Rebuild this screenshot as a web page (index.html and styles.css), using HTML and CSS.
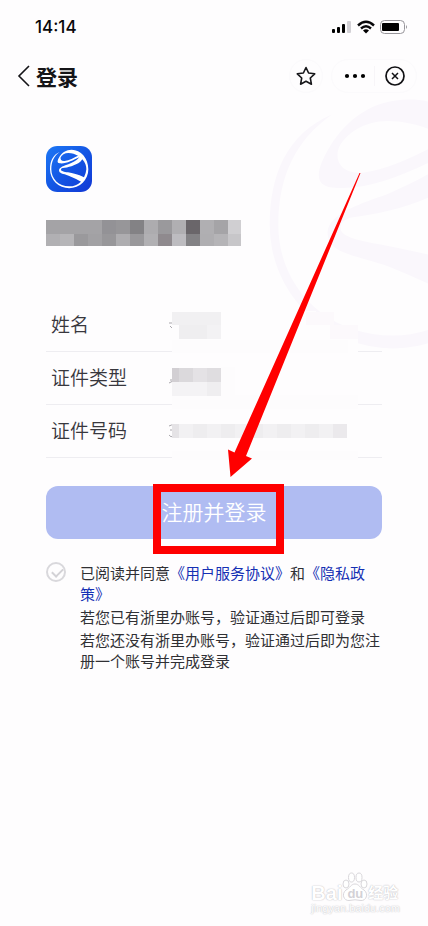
FILE: index.html
```
<!DOCTYPE html>
<html lang="zh-CN">
<head>
<meta charset="utf-8">
<meta name="viewport" content="width=device-width, initial-scale=1">
<title>登录</title>
<link rel="stylesheet" href="styles.css">
</head>
<body>
<svg width="0" height="0" class="defs" aria-hidden="true">
  <symbol id="mark" viewBox="0 0 138 138">
    <path d="M41 18C20 27 12 46 12 69.500A57.500 57.500 0 0 0 69.500 127A57.500 57.500 0 0 0 127 69.500C127 36 104 11 77 11C60 11 48 20 40 33C34 43 32 51 41 52C61 54 80 43 100 34C91 45 78 50 67 55C56 59 39 64 39 73C39 83 51 83 68 89Q88 97 105 107A52 52 0 0 1 69.500 121C38 121 16 98 16 69.500C16 47 24 30 41 18ZM96 29C84 35 70 43 56 45C47 46 42 41 44 34C47 27 56 21 67 21C78 21 88 25 96 29ZM50 66C66 64 87 59 103 47L109 40C118 50 121 60 121 70Q120 83 114 94C96 84 80 82 66 79C54 77 45 75 45 71C45 68 47 67 50 66Z" fill-rule="evenodd"/>
  </symbol>
</svg>
<div class="page">
  <svg class="backdrop" aria-hidden="true"><use href="#mark"/></svg>

  <div class="status">
    <span class="time">14:14</span>
    <div class="indicators">
      <svg width="20" height="14" viewBox="0 0 20 14" aria-hidden="true">
        <rect x="0" y="9" width="3" height="4" rx="1"/><rect x="5" y="7" width="3" height="6" rx="1"/><rect x="10" y="4" width="3" height="9" rx="1"/><rect x="15" y="1" width="4" height="12" rx="1" fill="#d3d1d6"/>
      </svg>
      <svg width="18" height="14" viewBox="0 0 18 14" aria-hidden="true">
        <path d="M1 5.500Q9-2 17 5.500M4 8.500Q9 4 14 8.500" fill="none" stroke="#08080a" stroke-width="2.400"/><path d="M6 10.500Q9 8 12 10.500L9 13.500Z"/>
      </svg>
      <svg width="28" height="14" viewBox="0 0 28 14" aria-hidden="true">
        <rect x=".5" y=".5" width="24" height="13" rx="4" fill="none" stroke="#97959a"/><rect x="2" y="3" width="17" height="8" rx="1"/><path d="M26 5Q28 7 26 9Z" fill="#97959a"/>
      </svg>
    </div>
  </div>

  <header class="nav">
    <button class="icon-btn" type="button" aria-label="返回"><svg width="14" height="22" viewBox="0 0 14 22"><path d="M12 1L2 11L12 21" fill="none" stroke="#151518" stroke-width="1.600"/></svg></button>
    <h1>登录</h1>
    <button class="icon-btn star" type="button" aria-label="收藏"><svg width="20" height="20" viewBox="0 0 20 20"><path d="M10 1.500L12.600 7L18.700 7.800L14.300 12L15.400 18.200L10 15.300L4.600 18.200L5.700 12L1.300 7.800L7.400 7Z" fill="none" stroke="#17171a" stroke-width="1.600" stroke-linejoin="round"/></svg></button>
    <div class="capsule">
      <button class="icon-btn" type="button" aria-label="更多"><svg width="22" height="6" viewBox="0 0 22 6"><circle cx="3" cy="3" r="2.100"/><circle cx="11" cy="3" r="2.100"/><circle cx="19" cy="3" r="2.100"/></svg></button>
      <button class="icon-btn close" type="button" aria-label="关闭"><svg width="20" height="20" viewBox="0 0 20 20"><circle cx="10" cy="10" r="9" fill="none" stroke="#111114" stroke-width="1.700"/><path d="M7 7L13 13M13 7L7 13" stroke="#111114" stroke-width="1.500"/></svg></button>
    </div>
  </header>

  <main>
    <svg class="logo" width="46" height="46" viewBox="0 0 138 138" role="img" aria-label="浙里办">
      <defs><linearGradient id="blue" x1="0" y1="0" x2="1" y2="1"><stop offset="0" stop-color="#1d78f5"/><stop offset=".5" stop-color="#1456e4"/><stop offset="1" stop-color="#1237d4"/></linearGradient></defs>
      <rect width="138" height="138" rx="34" fill="url(#blue)"/>
      <use href="#mark" fill="#fff"/>
    </svg>

    <svg class="masked-name" width="195" height="26" viewBox="0 0 195 26" shape-rendering="crispEdges" aria-hidden="true">
      <path fill="#a4a3a6" d="M0 0h56v14H0z"/><path fill="#939296" d="M56 0h14v14H56z"/><path fill="#979699" d="M70 0h14v14H70z"/><path fill="#838285" d="M84 0h14v14H84z"/><path fill="#adacaf" d="M98 0h14v14H98z"/><path fill="#9a999c" d="M112 0h14v14h-14z"/><path fill="#b0afb2" d="M126 0h14v14h-14z"/><path fill="#6a666a" d="M140 0h14v14h-14z"/><path fill="#b0afb2" d="M154 0h14v14h-14z"/><path fill="#a5a4a7" d="M168 0h14v14h-14z"/><path fill="#d0cfd2" d="M182 0h13v14h-13z"/>
      <path fill="#b1b0b3" d="M0 14h14v12H0z"/><path fill="#b6b5b8" d="M14 14h14v12H14z"/><path fill="#9a999c" d="M28 14h14v12H28z"/><path fill="#a2a1a4" d="M42 14h14v12H42z"/><path fill="#98979a" d="M56 14h14v12H56z"/><path fill="#aeadb0" d="M70 14h14v12H70z"/><path fill="#99989b" d="M84 14h14v12H84z"/><path fill="#b1b0b3" d="M98 14h14v12H98z"/><path fill="#8f8a8e" d="M112 14h14v12h-14z"/><path fill="#bdbcc0" d="M126 14h14v12h-14z"/><path fill="#838285" d="M140 14h14v12h-14z"/><path fill="#afaeb1" d="M154 14h14v12h-14z"/><path fill="#b5b4b7" d="M168 14h14v12h-14z"/><path fill="#c7c6c9" d="M182 14h13v12h-13z"/>
    </svg>

    <div class="fields">
      <div class="field">姓名</div>
      <div class="field">证件类型</div>
      <div class="field">证件号码</div>
      <svg class="field-mask" width="192" height="162" viewBox="0 0 192 162" aria-hidden="true">
        <path d="M3 24h4M4 27l3 3M4 81h3M3 84l4-2M3 127q3-2 4 0M4 131h3M3 136q2 3 4 1" fill="none" stroke="#aaa8ad"/>
        <g shape-rendering="crispEdges">
          <path fill="#fefdfe" d="M6 12h144v14h28v14h14v122H6z"/>
          <path fill="#fcf9fc" d="M140 13h28v13h-28zM164 26h28v14h-28z"/>
          <path fill="#fdfcfd" d="M6 41h176v13H6zM6 96h186v14H6zM55 68h14v28H55zM6 152h186v9H6z"/>
          <path fill="#f1f0f2" d="M6 13h49v13H6z"/><path fill="#efeef0" d="M13 26h28v14H13z"/><path fill="#f3f2f4" d="M41 26h14v14H41z"/>
          <path fill="#d2cfd3" d="M6 69h7v14H6z"/><path fill="#dbd9dc" d="M13 69h14v14H13z"/><path fill="#e4e2e5" d="M27 69h14v14H27z"/><path fill="#dfdde0" d="M41 69h14v14H41z"/><path fill="#f4f3f5" d="M6 83h35v14H6z"/><path fill="#efeef0" d="M41 83h14v14H41z"/>
          <path fill="#e5e3e6" d="M6 125h7v14H6z"/><path fill="#f2f1f3" d="M13 125h154v14H13z"/><path fill="#eeedef" d="M27 125h14v14H27zM55 125h14v14H55zM83 125h14v14H83zM111 125h14v14h-14zM139 125h14v14h-14z"/><path fill="#ebe9ec" d="M167 125h14v14h-14z"/>
        </g>
      </svg>
    </div>

    <div class="action">
      <button class="submit" type="button">注册并登录</button>
      <div class="highlight"></div>
      <svg class="arrow" width="136" height="306" viewBox="0 0 136 306" aria-hidden="true"><path fill="#f00" d="M134.500 0L20 283L26 285.500L4.500 304L2 276.500L8.500 279.500L133.500 0Z"/></svg>
    </div>

    <div class="agreement">
      <input id="agree" type="checkbox">
      <div class="terms">
        <label for="agree">已阅读并同意<a href="#service">《用户服务协议》</a>和<a href="#privacy">《隐私政策》</a></label>
        <p>若您已有浙里办账号，验证通过后即可登录</p>
        <p>若您还没有浙里办账号，验证通过后即为您注册一个账号并完成登录</p>
      </div>
    </div>
  </main>

  <footer class="credit">
    <div class="brand">
      <span class="latin">Bai</span>
      <span class="paw">
        <svg width="26" height="30" viewBox="0 0 26 30" aria-hidden="true"><g fill="#fff" stroke="#d9d7db"><ellipse cx="4" cy="12" rx="3" ry="4"/><ellipse cx="9.500" cy="5.500" rx="3" ry="4.500"/><ellipse cx="17" cy="5.500" rx="3" ry="4.500"/><ellipse cx="22" cy="12" rx="3" ry="4"/><path d="M13 12C9 12 8 16 4 18C-1 22 2 29 7 28.500Q13 27 19 28.500C24 29 27 22 22 18C18 16 17 12 13 12Z"/></g></svg>
        <span class="du">du</span>
      </span>
      <span class="han">经验</span>
    </div>
    <div class="url">jingyan.baidu.com</div>
  </footer>
</div>
</body>
</html>
```
FILE: styles.css
```
* {
  box-sizing: border-box;
}

body {
  margin: 0;
  background: #fefdfe;
  color: #303034;
  font-family: "Noto Sans CJK SC", sans-serif;
  text-spacing-trim: space-all;
}

h1,
p {
  margin: 0;
}

svg {
  display: block;
  flex: none;
}

.defs {
  position: absolute;
}

.page {
  position: relative;
  display: flex;
  flex-direction: column;
  min-height: 100vh;
  overflow: hidden;
}

.backdrop {
  position: absolute;
  top: 76px;
  right: -112px;
  width: 296px;
  height: 296px;
  fill: #faf7fc;
}

.status {
  display: flex;
  align-items: center;
  justify-content: space-between;
  height: 54px;
  padding: 0 20px 0 35px;
}

.time {
  color: #08080a;
  font: 500 17px/20px Inter, sans-serif;
}

.indicators {
  display: flex;
  gap: 5px;
}

.nav {
  position: relative;
  display: flex;
  align-items: center;
  height: 43px;
  padding: 0 11px 0 17px;
}

.nav h1 {
  flex: 1;
  padding-left: 5px;
  color: #151518;
  font-size: 21px;
  line-height: 30px;
  font-weight: 700;
}

.icon-btn {
  display: flex;
  align-items: center;
  justify-content: center;
  padding: 0;
  border: 0;
  background: none;
}

.star {
  width: 34px;
  height: 34px;
  margin-right: 8px;
  border: 1px solid #fbfafc;
  border-radius: 17px;
}

.capsule {
  display: grid;
  grid-template-columns: 1fr 1fr;
  width: 86px;
  height: 34px;
  border: 1px solid #fbfafc;
  border-radius: 17px;
}

.capsule .icon-btn:first-child {
  padding-left: 4px;
}

.close {
  border-left: 1px solid #f7f5f8;
  margin: 6px 0;
  padding-right: 2px;
}

main {
  position: relative;
  padding: 49px 46px 0;
}

.masked-name {
  margin: 28px 0 53px;
}

.fields {
  position: relative;
}

.field {
  height: 53px;
  padding-left: 5px;
  border-bottom: 1px solid #eeedf1;
  color: #38373d;
  font-size: 19px;
  line-height: 50px;
  font-weight: 350;
}

.field-mask {
  position: absolute;
  top: 0;
  left: 120px;
}

.action {
  position: relative;
  margin-top: 28px;
}

.submit {
  display: block;
  width: 100%;
  height: 53px;
  padding: 0 0 3px;
  border: 0;
  border-radius: 12px;
  background: #b0bcf2;
  color: #fff;
  font: 350 21px/50px "Noto Sans CJK SC", sans-serif;
}

.highlight {
  position: absolute;
  top: -2px;
  left: 107px;
  width: 131px;
  height: 70px;
  border: 8px solid #f00;
}

.arrow {
  position: absolute;
  top: -313px;
  left: 180px;
}

.agreement {
  display: flex;
  gap: 14px;
  margin-top: 23px;
  margin-right: -6px;
}

.agreement input {
  flex: none;
  width: 20px;
  height: 20px;
  margin: 0;
  appearance: none;
  border: 2px solid #d9d8dc;
  border-radius: 50%;
}

.agreement input::before {
  display: block;
  width: 9px;
  height: 5px;
  margin: 4px;
  border: solid #d3d2d6;
  border-width: 0 0 2px 2px;
  content: "";
  transform: rotate(-45deg);
}

.terms {
  display: grid;
  gap: 2px;
  font-size: 15px;
  line-height: 21px;
}

.terms a {
  color: #1530b4;
  text-decoration: none;
}

.credit {
  position: relative;
  align-self: flex-end;
  margin-top: auto;
  padding: 0 28px 11px 0;
  color: #fff;
  font-family: "Liberation Sans", "Noto Sans CJK SC", sans-serif;
  text-shadow: 0 0 1px #bbb9bf, 0 0 2px #dddbdf;
}

.brand {
  display: flex;
  align-items: flex-end;
}

.latin {
  width: 31px;
  font-size: 20px;
  line-height: 18px;
  font-weight: 700;
}

.paw {
  display: grid;
}

.paw > * {
  grid-area: 1 / 1;
}

.du {
  align-self: end;
  justify-self: center;
  color: #d3d1d6;
  font-size: 13px;
  line-height: 17px;
  font-weight: 700;
  text-shadow: none;
}

.han {
  font-size: 15px;
  line-height: 18px;
  font-weight: 700;
}

.url {
  font-size: 11px;
  line-height: 13px;
}
```
